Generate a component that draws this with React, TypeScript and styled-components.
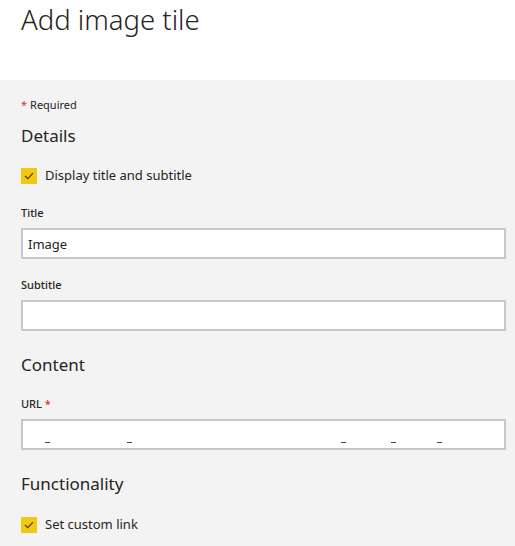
import React from "react";
import styled, { createGlobalStyle } from "styled-components";

const Global = createGlobalStyle`
  html, body {
    margin: 0;
    padding: 0;
    background: #f3f3f3;
    font-family: "Segoe UI", "Noto Sans", "Open Sans", sans-serif;
    color: #252423;
  }
`;

const Page = styled.div`
  width: 515px;
  height: 546px;
  overflow: hidden;
  display: flex;
  flex-direction: column;
`;

const Header = styled.header`
  height: 80px;
  background: #ffffff;
  padding: 0 21px;
  box-sizing: border-box;
`;

const Heading = styled.h1`
  margin: 0;
  padding-top: 1px;
  font-size: 27.5px;
  font-weight: 300;
  line-height: 38px;
  color: #252423;
`;

const Body = styled.div`
  flex: 1;
  background: #f3f3f3;
  padding: 18px 9px 0 21px;
  display: flex;
  flex-direction: column;
`;

const Required = styled.div`
  font-size: 11px;
  line-height: 14px;
  color: #252423;
`;

const Star = styled.span`
  color: #d13438;
  margin-right: 3px;
`;

const SectionTitle = styled.h2<{ $top: number }>`
  margin: ${(p) => p.$top}px 0 0;
  font-size: 17px;
  font-weight: 400;
  line-height: 24px;
  color: #252423;
`;

const CheckRow = styled.label<{ $top: number }>`
  display: flex;
  align-items: center;
  gap: 8px;
  margin-top: ${(p) => p.$top}px;
  font-size: 13px;
  line-height: 17px;
  color: #252423;
`;

const Box = styled.span`
  width: 16px;
  height: 16px;
  background: #f2c811;
  display: flex;
  align-items: center;
  justify-content: center;
`;

const Label = styled.div<{ $top: number }>`
  margin-top: ${(p) => p.$top}px;
  font-size: 11px;
  font-weight: 500;
  line-height: 14px;
  color: #252423;
`;

const Field = styled.div`
  margin-top: 8px;
  height: 31px;
  box-sizing: border-box;
  border: 2px solid #c8c8c8;
  background: #ffffff;
  padding: 0 5px;
  display: flex;
  align-items: center;
  font-size: 13px;
  color: #252423;
  overflow: hidden;
  position: relative;
`;

const Mark = styled.span<{ $left: number }>`
  position: absolute;
  left: ${(p) => p.$left}px;
  bottom: 5px;
  width: 5px;
  height: 1px;
  background: #444;
`;

const Check = () => (
  <Box>
    <svg width="10" height="8" viewBox="0 0 10 8">
      <path d="M1 4 L3.8 6.6 L9 1.2" fill="none" stroke="#4a3f10" strokeWidth="1.2" />
    </svg>
  </Box>
);

export default function App() {
  return (
    <Page>
      <Global />
      <Header>
        <Heading>Add image tile</Heading>
      </Header>
      <Body>
        <Required>
          <Star>*</Star>Required
        </Required>
        <SectionTitle $top={12}>Details</SectionTitle>
        <CheckRow $top={19}>
          <Check />
          Display title and subtitle
        </CheckRow>
        <Label $top={22}>Title</Label>
        <Field>Image</Field>
        <Label $top={19}>Subtitle</Label>
        <Field />
        <SectionTitle $top={22}>Content</SectionTitle>
        <Label $top={20}>
          URL <Star>*</Star>
        </Label>
        <Field>
          <Mark $left={22} />
          <Mark $left={104} />
          <Mark $left={318} />
          <Mark $left={368} />
          <Mark $left={414} />
        </Field>
        <SectionTitle $top={22}>Functionality</SectionTitle>
        <CheckRow $top={20}>
          <Check />
          Set custom link
        </CheckRow>
      </Body>
    </Page>
  );
}
